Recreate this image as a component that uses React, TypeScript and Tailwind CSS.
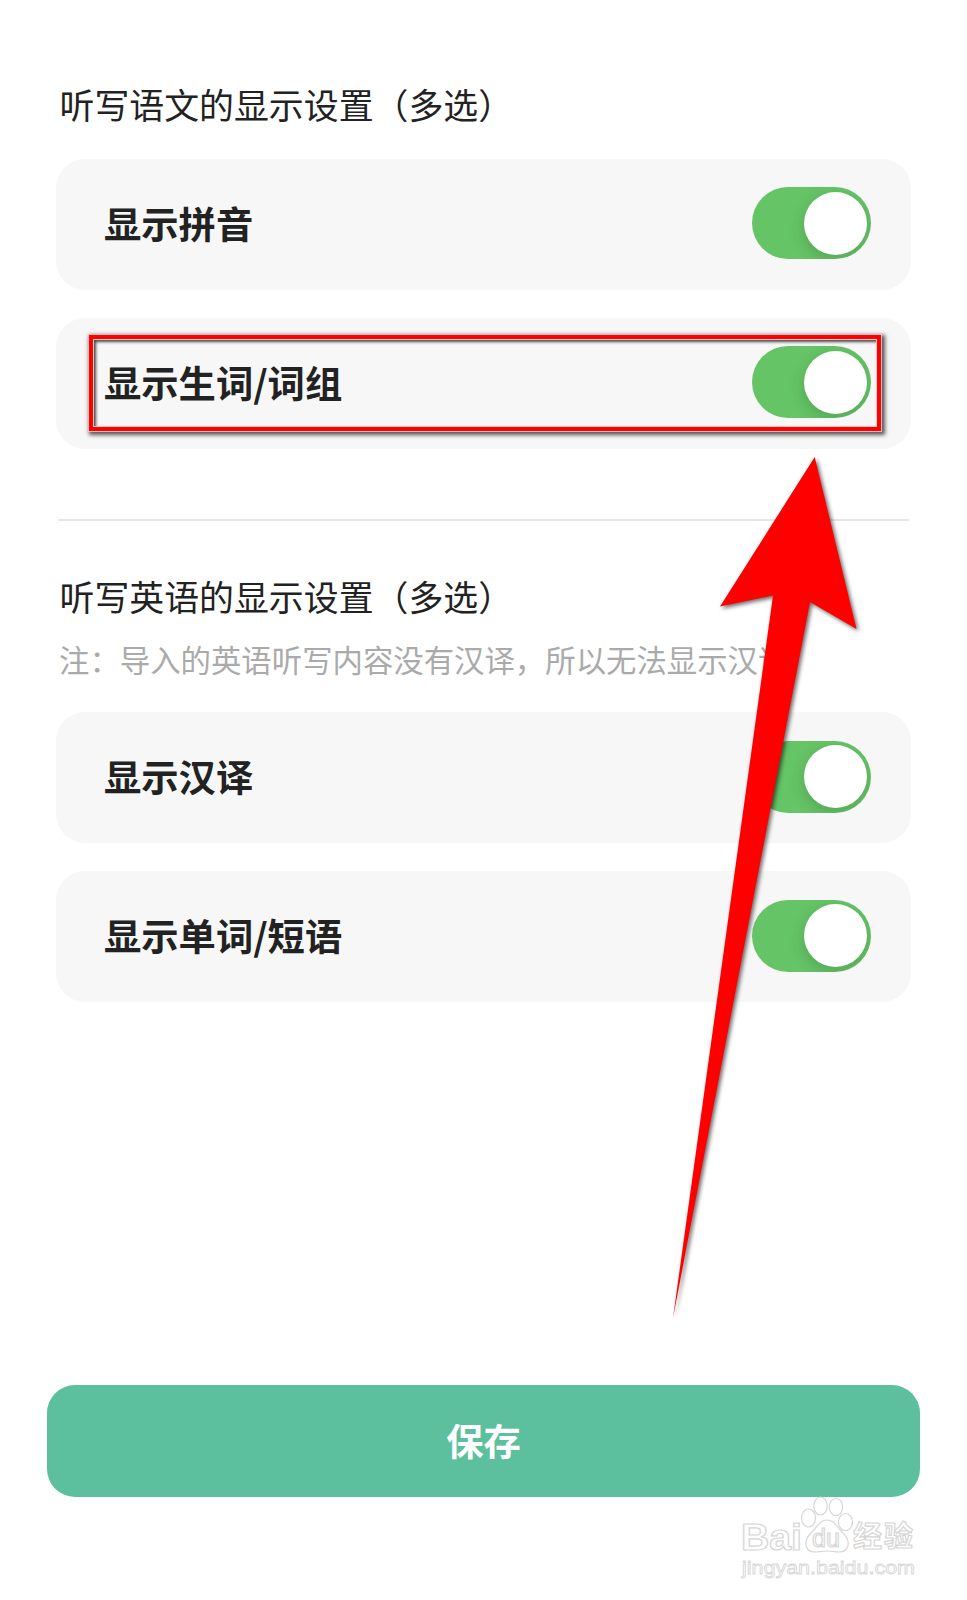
import { useState } from 'react';

const FONT = "font-['Noto_Sans_CJK_SC',sans-serif]";

function Toggle({ on, onChange }: { on: boolean; onChange: () => void }) {
  return (
    <button
      type="button"
      role="switch"
      aria-checked={on}
      onClick={onChange}
      className={`${on ? 'justify-end bg-[#65c466]' : 'justify-start bg-gray-300'} mb-[2px] flex h-[72px] w-[119px] items-center overflow-hidden rounded-full px-[4.5px]`}
    >
      <span className="size-[63px] rounded-full bg-white shadow-[0_5px_16px_rgba(0,0,0,0.16)]" />
    </button>
  );
}

function SettingRow({ label }: { label: string }) {
  const [on, setOn] = useState(true);

  return (
    <div className="flex h-[131px] items-center justify-between rounded-[29px] bg-[#f7f7f7] pr-10 pl-12">
      <span className="mb-[3px] text-[37.3px] leading-[56px] font-bold text-[#222]">{label}</span>
      <Toggle on={on} onChange={() => setOn(!on)} />
    </div>
  );
}

export default function App() {
  return (
    <div className={`${FONT} relative h-[1600px] w-[967px] overflow-hidden bg-white`}>
      <main className="flex flex-col px-14">
        {/* Chinese dictation */}
        <h2 className="mt-[79px] pl-[3.5px] text-[34.9px] leading-[50px] text-[#222]">听写语文的显示设置（多选）</h2>
        <div className="mt-[29.5px] flex flex-col gap-7">
          <SettingRow label="显示拼音" />
          <SettingRow label="显示生词/词组" />
        </div>

        <hr className="mx-[2px] mt-[70.5px] border-t-2 border-[#e6e6e6]" />

        {/* English dictation */}
        <h2 className="mt-[50px] pl-[3.5px] text-[34.9px] leading-[50px] text-[#222]">听写英语的显示设置（多选）</h2>
        <p className="mt-[16px] pl-[3px] text-[30.4px] leading-[44px] whitespace-nowrap text-[#aaa]">
          注：导入的英语听写内容没有汉译，所以无法显示汉译
        </p>
        <div className="mt-[31px] flex flex-col gap-7">
          <SettingRow label="显示汉译" />
          <SettingRow label="显示单词/短语" />
        </div>
      </main>

      <footer className="mt-[383px] px-[47px]">
        <button type="button" className="h-[112px] w-full rounded-[28px] bg-[#5cbf9e] text-[37.3px] font-bold text-white">
          保存
        </button>
      </footer>

      {/* Highlight frame */}
      <div className="absolute top-[334px] left-[88px] h-[98px] w-[794px] border border-[#eebcbc] shadow-[2px_2px_4px_1px_rgba(0,0,0,0.65)]">
        <div className="size-full border-4 border-[#ff0000]">
          <div className="size-full border border-[#f0cccc] shadow-[inset_2px_2px_3px_rgba(0,0,0,0.7)]" />
        </div>
      </div>

      {/* Arrow */}
      <svg className="absolute top-0 left-0 drop-shadow-[2px_2px_2px_rgba(0,0,0,0.6)]" width="967" height="1600" viewBox="0 0 967 1600">
        <path d="M814.7 457 L856.5 629 L810 602 L673 1318 L773 595.5 L720 606.5 Z" fill="#ff0000" />
      </svg>

      {/* Watermark */}
      <svg className="absolute top-[1490px] left-[735px]" width="200" height="95" viewBox="0 0 200 95" fill="#fff" stroke="#d6d6d6" strokeWidth="1.2">
        <text x="6" y="60" fontFamily="Liberation Sans" fontSize="36" fontWeight="700" textLength="61" lengthAdjust="spacingAndGlyphs">Bai</text>
        <ellipse cx="73.5" cy="28" rx="7" ry="9" />
        <ellipse cx="85.5" cy="16" rx="6.7" ry="9" />
        <ellipse cx="101" cy="17" rx="6.7" ry="8.5" />
        <ellipse cx="110.5" cy="32" rx="7" ry="8.5" />
        <path d="M92 30 C85 30 83 36 77 42 C67 51 70 62 80 62 C85 62 87 61 92 61 C97 61 99 62 104 62 C114 62 117 51 107 42 C101 36 99 30 92 30 Z" />
        <text x="77" y="57" fontFamily="Liberation Sans" fontSize="25" textLength="28" lengthAdjust="spacingAndGlyphs">du</text>
        <text x="118" y="57" fontFamily="Noto Sans CJK SC" fontSize="29" fontWeight="700" textLength="60">经验</text>
        <text x="7" y="84" fontFamily="Liberation Sans" fontSize="19" textLength="173" lengthAdjust="spacingAndGlyphs" strokeWidth="0.8">jingyan.baidu.com</text>
      </svg>
    </div>
  );
}
